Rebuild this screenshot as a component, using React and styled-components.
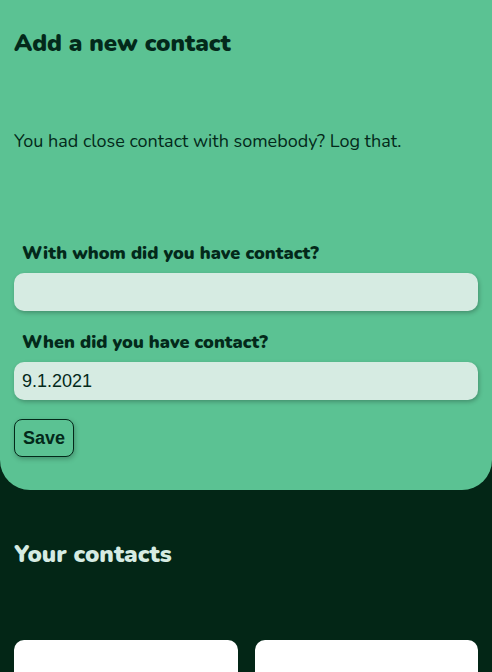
import styled, { createGlobalStyle } from "styled-components";

const GlobalStyle = createGlobalStyle`
  body {
    margin: 0;
    background: #032616;
    font-family: "Nunito", "Lato", "Noto Sans", sans-serif;
  }
`;

const Page = styled.div`
  height: 672px;
  overflow: hidden;
  background: #032616;
`;

const AddSection = styled.section`
  background: #5bc293;
  color: #03291a;
  padding: 29px 14px 33px;
  border-radius: 0 0 30px 30px;
`;

const Title = styled.h2`
  margin: 0;
  font-size: 24px;
  font-weight: 900;
  line-height: 28px;
  color: ${(p) => p.color || "#03291a"};
`;

const Intro = styled.p`
  margin: 72px 0 0;
  font-size: 18px;
  line-height: 24px;
`;

const Form = styled.form`
  display: flex;
  flex-direction: column;
  margin-top: 88px;
`;

const Label = styled.label`
  font-size: 18px;
  font-weight: 900;
  padding-left: 8px;
  line-height: 24px;
  margin-top: ${(p) => p.top || 0}px;
`;

const Input = styled.input`
  margin-top: 8px;
  height: 38px;
  box-sizing: border-box;
  border: none;
  border-radius: 10px;
  background: #d6ebe2;
  box-shadow: 1px 2px 4px rgba(0, 0, 0, 0.25);
  padding: 0 8px;
  font-family: "Liberation Sans", Arial, sans-serif;
  font-size: 18px;
  color: #03291a;
  outline: none;
`;

const SaveButton = styled.button`
  align-self: flex-start;
  margin-top: 19px;
  height: 38px;
  padding: 0 8px;
  border: 1px solid #03291a;
  border-radius: 8px;
  background: #5bc293;
  box-shadow: 1px 2px 5px rgba(0, 0, 0, 0.25);
  font-family: "Liberation Sans", Arial, sans-serif;
  font-weight: 700;
  font-size: 18px;
  color: #03291a;
`;

const ContactsSection = styled.section`
  padding: 50px 14px 0;
`;

const CardGrid = styled.div`
  display: grid;
  grid-template-columns: 1fr 1fr;
  gap: 17px;
  margin-top: 72px;
`;

const Card = styled.div`
  height: 120px;
  background: #ffffff;
  border-radius: 10px;
`;

export default function App() {
  return (
    <Page>
      <GlobalStyle />
      <AddSection>
        <Title>Add a new contact</Title>
        <Intro>You had close contact with somebody? Log that.</Intro>
        <Form onSubmit={(e) => e.preventDefault()}>
          <Label htmlFor="who">With whom did you have contact?</Label>
          <Input id="who" type="text" />
          <Label htmlFor="when" top={19}>
            When did you have contact?
          </Label>
          <Input id="when" type="text" defaultValue="9.1.2021" />
          <SaveButton type="submit">Save</SaveButton>
        </Form>
      </AddSection>
      <ContactsSection>
        <Title color="#d6ebe2">Your contacts</Title>
        <CardGrid>
          <Card />
          <Card />
        </CardGrid>
      </ContactsSection>
    </Page>
  );
}
